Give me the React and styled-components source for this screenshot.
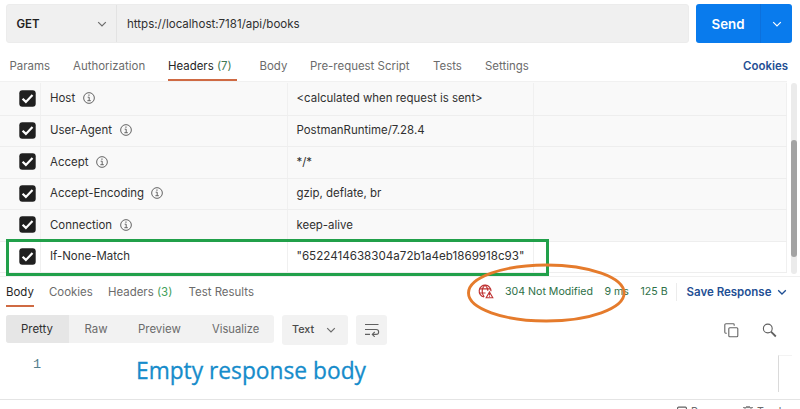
import React from 'react';
import styled, { createGlobalStyle, css } from 'styled-components';

const GlobalStyle = createGlobalStyle`
  * { box-sizing: border-box; }
  body { margin: 0; background: #fff; overflow: hidden; }
  svg { flex-shrink: 0; }
`;

const Window = styled.div`
  position: relative;
  display: flex;
  flex-direction: column;
  width: 800px;
  height: 409px;
  overflow: hidden;
  background: #fff;
  color: #303030;
  font-family: Inter, 'Liberation Sans', sans-serif;
  font-size: 11.45px;
  line-height: 16px;
  white-space: nowrap;

  > * { flex-shrink: 0; }
`;

/* Request bar */
const RequestBar = styled.header`
  display: flex;
  gap: 7px;
  height: 43px;
  padding: 4px 8px 0 6px;
`;

const UrlField = styled.div`
  display: flex;
  width: 683px;
  height: 39px;
  background: #f0f0f0;
  border: 1px solid #ececec;
  border-radius: 3px;
`;

const Method = styled.div`
  display: flex;
  align-items: center;
  justify-content: space-between;
  width: 110px;
  padding: 0 9px 0 9.5px;
  border-right: 1px solid #e3e3e3;
  color: #212121;
  font-weight: 600;
`;

const Url = styled.div`
  display: flex;
  align-items: center;
  padding-left: 10px;
  font-size: 11.55px;
`;

const SendButton = styled.div`
  display: flex;
  width: 96px;
  height: 39px;
  border-radius: 3px;
  background: #097bed;
  color: #fff;
  font-size: 13.3px;
  font-weight: 600;
`;

const SendLabel = styled.span`
  display: flex;
  align-items: center;
  width: 65px;
  padding-left: 15.5px;
  border-right: 1px solid #0c70dc;
`;

const SendMenu = styled.span`
  display: flex;
  flex: 1;
  align-items: center;
  justify-content: center;
`;

/* Tabs */
const TabBar = styled.nav`
  display: flex;
  height: 38px;
  padding: 0 12px 0 9.5px;
`;

const Tab = styled.span`
  width: ${(p) => p.$width}px;
  margin-right: ${(p) => p.$after || 0}px;
  padding-top: ${(p) => p.$top || 15}px;
  color: ${(p) => (p.$active ? '#262626' : '#6b6b6b')};
  ${(p) => p.$active && css`
    border-bottom: 2px solid #cf6a43;
  `}
`;

const Count = styled.span`
  color: ${(p) => p.$tone || '#3f7a55'};
`;

const CookiesLink = styled.span`
  margin-left: auto;
  padding-top: 15px;
  color: #1f4f94;
  font-weight: 600;
`;

/* Header table */
const TableArea = styled.section`
  display: flex;
  height: 196px;
  border-bottom: 1px solid #f0f0f0;
`;

const Table = styled.div`
  width: 787px;
`;

const Row = styled.div`
  display: grid;
  grid-template-columns: 41px 247px 246px 1fr;
  height: ${(p) => p.$height}px;
  padding-top: ${(p) => p.$top || 0}px;
  background: ${(p) => (p.$plain ? '#fff' : '#f9f9f9')};
  border-bottom: 1px solid #eeeeee;
  border-top: ${(p) => (p.$first ? '1px solid #f1f1f1' : '0')};
`;

const Cell = styled.div`
  display: flex;
  align-items: center;
  gap: 7.5px;
  padding: 0 0 1.4px ${(p) => p.$left || 0}px;
  border-right: 1px solid #f0f0f0;
`;

const Value = styled.span`
  font-size: ${(p) => p.$size || 11.45}px;
`;

const ScrollTrack = styled.div`
  width: 6px;
  height: 191px;
  margin: 2px 0 0 4px;
  padding-top: 57px;
  border-radius: 3px;
  background: #ebebeb;
`;

const ScrollThumb = styled.div`
  height: 117px;
  border-radius: 3px;
  background: #a3a3a3;
`;

/* Response */
const ResponseHeader = styled.div`
  display: flex;
  height: 30px;
`;

const ResponseTabs = styled.div`
  display: flex;
  gap: 15px;
  width: 477px;
  padding-left: 6px;
`;

const Status = styled.div`
  display: flex;
  align-items: flex-start;
  padding-top: 7px;
  color: #2e7047;
  font-size: 10.6px;
`;

const StatusIcon = styled.span`
  width: 28px;
  height: 16px;
  padding-left: 0.6px;
`;

const StatusText = styled.span`
  width: ${(p) => p.$width}px;
`;

const SaveResponse = styled.div`
  display: flex;
  align-items: center;
  gap: 6px;
  height: 18px;
  margin-top: 6px;
  padding-left: 9.5px;
  border-left: 1px solid #ececec;
  color: #1f4f94;
  font-size: 11.5px;
  font-weight: 600;
`;

const Toolbar = styled.div`
  display: flex;
  align-items: flex-start;
  height: 38px;
  padding: 8px 23px 0 6px;
  color: #6b6b6b;
`;

const Segments = styled.div`
  display: flex;
  width: 268px;
  height: 28px;
  margin-right: 8px;
  overflow: hidden;
  border-radius: 3px;
  background: #f2f2f2;
`;

const Segment = styled.span`
  display: flex;
  align-items: center;
  width: ${(p) => p.$width}px;
  padding-left: ${(p) => p.$left}px;
  background: ${(p) => (p.$active ? '#e6e6e6' : 'transparent')};
  color: ${(p) => (p.$active ? '#303030' : '#6b6b6b')};
  font-size: ${(p) => p.$size || 11.45}px;
`;

const ToolButton = styled.span`
  display: flex;
  align-items: center;
  justify-content: space-between;
  width: ${(p) => p.$width}px;
  height: 30px;
  margin-right: 8px;
  padding: 0 ${(p) => p.$right}px 0 ${(p) => p.$left}px;
  border-radius: 3px;
  background: #f2f2f2;
  color: #4a4a4a;
  font-size: 10.8px;
  font-weight: 500;
`;

const ToolIcons = styled.span`
  display: flex;
  gap: 23.5px;
  margin: 7.5px 0 0 auto;
`;

const Editor = styled.main`
  display: flex;
  height: 54px;
`;

const LineNumber = styled.span`
  width: 41px;
  padding: 12px 0 0 33px;
  color: #557f8d;
  font: 13.5px/16px 'Liberation Mono', monospace;
`;

const Caption = styled.span`
  padding: 11px 0 0 95px;
  color: #168ccb;
  font: 22.75px/30px 'Open Sans', sans-serif;
  -webkit-text-stroke: 0.3px #168ccb;
`;

const Minimap = styled.span`
  width: 14px;
  height: 37px;
  margin: 10px 8px 0 auto;
  border-left: 1px solid #dadada;
  border-top: 1px solid #f3f3f3;
`;

const Footer = styled.footer`
  display: flex;
  gap: 5px;
  height: 30px;
  padding: 5px 0 0 677px;
  border-top: 1px solid #e4e4e4;
  color: #6b6b6b;
  font-size: 10.6px;
  line-height: 14px;

  svg { margin-top: 1px; }
`;

const FooterItem = styled.span`
  display: flex;
  gap: 4px;
  width: ${(p) => p.$width}px;
`;

/* Annotations laid over the page */
const GreenFrame = styled.div`
  position: absolute;
  left: 6px;
  top: 239px;
  width: 543px;
  height: 37px;
  border: 3px solid #21a04a;
`;

const EllipseMark = styled.svg`
  position: absolute;
  left: 464px;
  top: 260px;
  width: 166px;
  height: 66px;
`;

const Chevron = ({ color = '#6b6b6b', width = 1.2 }) => (
  <svg width="10" height="8" viewBox="0 0 10 8" fill="none" stroke={color} strokeWidth={width}>
    <path d="M1.2 2.2l3.8 3.8 3.8-3.8" />
  </svg>
);

const Check = () => (
  <svg width="17" height="17" viewBox="0 0 17 17">
    <rect x="0.3" y="0.3" width="16.4" height="16.4" rx="3" fill="#202020" />
    <path d="M3.6 8.7l3.3 3.2 6.6-6.8" fill="none" stroke="#fff" strokeWidth="2.2" />
  </svg>
);

const Info = () => (
  <svg width="12" height="12" viewBox="0 0 12 12" fill="none" stroke="#5c5c5c" strokeWidth="0.95">
    <circle cx="6" cy="6" r="5.35" />
    <path d="M4.7 5.2H6.2V8.6M4.4 8.7H7.8" />
    <path d="M5.4 3.2H6.5" strokeWidth="1.2" />
  </svg>
);

const GlobeAlert = () => (
  <svg width="16" height="16" viewBox="0 0 16 16" fill="none" stroke="#bf3434" strokeWidth="1.2">
    <path d="M6 12.9A5.9 5.9 0 1 1 13 7.2" />
    <path d="M6.9 1.1C3.4 4.2 3.4 9.8 6.2 12.9M7.1 1.1C8.9 2.7 9.8 4.5 9.8 6.8M1.6 4.8H12.4M1.3 9H7.5" />
    <path d="M11.5 7.9l3.3 5.8H8.2zM11.5 9.9v1.6M11.5 12.2v.8" fill="#fff" strokeWidth="1.1" />
  </svg>
);

const WrapIcon = () => (
  <svg width="16" height="14" viewBox="0 0 16 14" fill="none" stroke="#606060" strokeWidth="1.1">
    <path d="M1 1.5H14.5M1 6.5H12.2a2.3 2.3 0 0 1 0 4.9H8.7M1 11.4H6" />
    <path d="M10.7 9l-2.4 2.4 2.4 2.4" />
  </svg>
);

const CopyIcon = () => (
  <svg width="15" height="15" viewBox="0 0 15 15" fill="none" stroke="#666" strokeWidth="1.1">
    <rect x="4.8" y="4.8" width="9" height="9" rx="1" />
    <path d="M2.8 10.2H1.7a.9.9 0 0 1-.9-.9V2A1.2 1.2 0 0 1 2 .8H9.3a.9.9 0 0 1 .9.9V2.8" />
  </svg>
);

const SearchIcon = () => (
  <svg width="15" height="15" viewBox="0 0 15 15" fill="none" stroke="#606060">
    <circle cx="5.8" cy="5.5" r="4.4" strokeWidth="1.1" />
    <path d="M9 8.7l4.8 4.8" strokeWidth="1.8" />
  </svg>
);

const RunnerIcon = () => (
  <svg width="10" height="10" viewBox="0 0 10 10" fill="none" stroke="#606060" strokeWidth="1.1">
    <rect x="0.6" y="1.1" width="8.8" height="8.3" rx="1" />
  </svg>
);

const TrashIcon = () => (
  <svg width="10" height="10" viewBox="0 0 10 10" fill="none" stroke="#808080">
    <path d="M0 1.6H10M3 .7H7M2 2V9H8V2" />
  </svg>
);

const headers = [
  { name: 'Host', value: '<calculated when request is sent>', info: true, height: 35, top: 1, first: true },
  { name: 'User-Agent', value: 'PostmanRuntime/7.28.4', info: true, height: 31 },
  { name: 'Accept', value: '*/*', info: true, height: 32 },
  { name: 'Accept-Encoding', value: 'gzip, deflate, br', info: true, height: 31 },
  { name: 'Connection', value: 'keep-alive', info: true, height: 32 },
  { name: 'If-None-Match', value: '"6522414638304a72b1a4eb1869918c93"', height: 31, plain: true, size: 11.63 },
];

export default function App() {
  return (
    <>
      <GlobalStyle />
      <Window>
        <RequestBar>
          <UrlField>
            <Method>GET<Chevron /></Method>
            <Url>https://localhost:7181/api/books</Url>
          </UrlField>
          <SendButton>
            <SendLabel>Send</SendLabel>
            <SendMenu><Chevron color="#fff" /></SendMenu>
          </SendButton>
        </RequestBar>

        <TabBar>
          <Tab $width={40} $after={23.5}>Params</Tab>
          <Tab $width={73} $after={22}>Authorization</Tab>
          <Tab $width={69} $after={22.5} $active>Headers <Count>(7)</Count></Tab>
          <Tab $width={28} $after={22.5}>Body</Tab>
          <Tab $width={100} $after={23}>Pre-request Script</Tab>
          <Tab $width={29} $after={23}>Tests</Tab>
          <Tab $width={45}>Settings</Tab>
          <CookiesLink>Cookies</CookiesLink>
        </TabBar>

        <TableArea>
          <Table>
            {headers.map((h) => (
              <Row key={h.name} $height={h.height} $top={h.top} $plain={h.plain} $first={h.first}>
                <Cell $left={19}><Check /></Cell>
                <Cell $left={9}>{h.name}{h.info && <Info />}</Cell>
                <Cell $left={8.5}><Value $size={h.size}>{h.value}</Value></Cell>
                <Cell />
              </Row>
            ))}
          </Table>
          <ScrollTrack><ScrollThumb /></ScrollTrack>
        </TableArea>

        <ResponseHeader>
          <ResponseTabs>
            <Tab $top={7} $width={28} $active>Body</Tab>
            <Tab $top={7} $width={44}>Cookies</Tab>
            <Tab $top={7} $width={65.5}>Headers <Count $tone="#43a05c">(3)</Count></Tab>
            <Tab $top={7} $width={66}>Test Results</Tab>
          </ResponseTabs>
          <Status>
            <StatusIcon><GlobeAlert /></StatusIcon>
            <StatusText $width={99.5}>304 Not Modified</StatusText>
            <StatusText $width={36}>9 ms</StatusText>
            <StatusText $width={35.5}>125 B</StatusText>
          </Status>
          <SaveResponse>Save Response<Chevron color="#1f4f94" width={1.3} /></SaveResponse>
        </ResponseHeader>

        <Toolbar>
          <Segments>
            <Segment $width={63} $left={15} $active>Pretty</Segment>
            <Segment $width={54} $left={15.5}>Raw</Segment>
            <Segment $width={74} $left={15}>Preview</Segment>
            <Segment $width={77} $left={15} $size={11.2}>Visualize</Segment>
          </Segments>
          <ToolButton $width={66} $left={10} $right={12}>Text<Chevron /></ToolButton>
          <ToolButton $width={31} $left={7.5} $right={7.5}><WrapIcon /></ToolButton>
          <ToolIcons><CopyIcon /><SearchIcon /></ToolIcons>
        </Toolbar>

        <Editor>
          <LineNumber>1</LineNumber>
          <Caption>Empty response body</Caption>
          <Minimap />
        </Editor>

        <Footer>
          <FooterItem $width={61}><RunnerIcon />Runner</FooterItem>
          <FooterItem $width={50}><TrashIcon />Trash</FooterItem>
        </Footer>

        <GreenFrame />
        <EllipseMark viewBox="0 0 166 66">
          <ellipse cx="82.3" cy="33" rx="77.8" ry="28" fill="none" stroke="#e57b2c" strokeWidth="2.9" />
        </EllipseMark>
      </Window>
    </>
  );
}
